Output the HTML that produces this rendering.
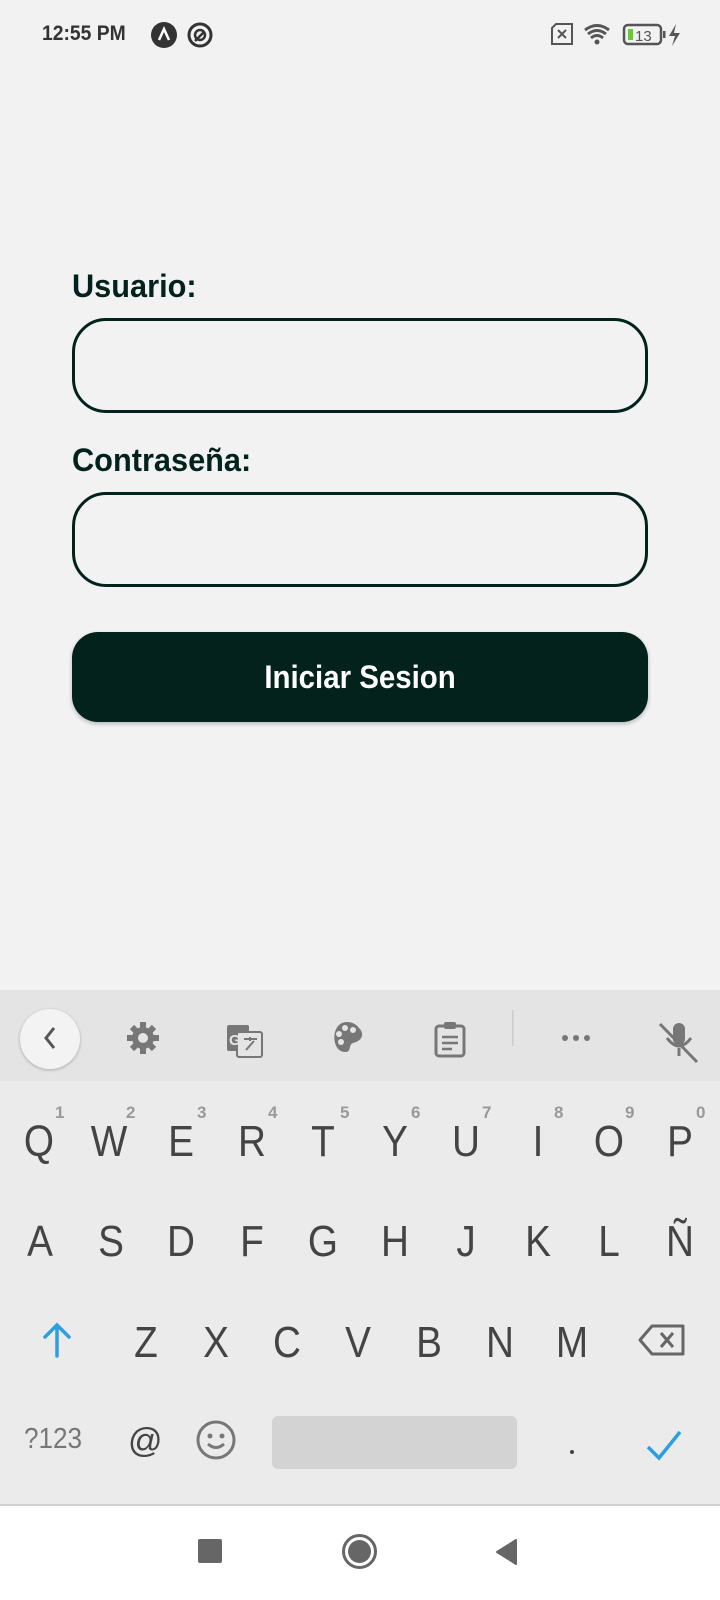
<!DOCTYPE html>
<html><head><meta charset="utf-8"><style>
*{margin:0;padding:0;box-sizing:border-box}
body{width:720px;height:1600px;background:#f2f2f2;font-family:"Liberation Sans",sans-serif;position:relative;overflow:hidden}
.abs{position:absolute}
.lbl{position:absolute;left:72px;font-size:32px;font-weight:bold;color:#02221b;transform:scaleX(.96);transform-origin:left}
.inp{position:absolute;left:72px;width:576px;height:95px;border:3px solid #02221b;border-radius:34px}
.btn{position:absolute;left:72px;top:632px;width:576px;height:90px;background:#02221b;border-radius:26px;box-shadow:0 2px 4px rgba(0,0,0,.25);color:#fff;font-weight:bold;font-size:32px;text-align:center;line-height:90px}
.kb{position:absolute;left:0;top:990px;width:720px;height:514px;background:#ebebeb}
.tb{position:absolute;left:0;top:990px;width:720px;height:91px;background:#e4e4e4}
.k{position:absolute;width:72px;text-align:center;font-size:44px;color:#444;line-height:1;transform:scaleX(.88)}
.d{position:absolute;font-size:17px;color:#999;font-weight:bold}
.nav{position:absolute;left:0;top:1504px;width:720px;height:96px;background:#fff;border-top:2px solid #d0d0d0}
</style></head><body>
<div class="abs" style="left:42px;top:22px;font-size:21px;font-weight:bold;color:#333;transform:scaleX(.92);transform-origin:left">12:55 PM</div>
<svg class="abs" style="left:150px;top:21px" width="64" height="28"><circle cx="14" cy="14" r="13" fill="#333"/><path d="M9 19 L14 8 L19 19" stroke="#fff" stroke-width="2.5" fill="none"/><circle cx="50" cy="14" r="11" stroke="#333" stroke-width="3" fill="none"/><circle cx="50" cy="14" r="5" stroke="#333" stroke-width="2.5" fill="none"/><path d="M45 20 L54 11" stroke="#333" stroke-width="2.5"/></svg>
<svg class="abs" style="left:548px;top:22px" width="142" height="26">
<path d="M4 6 L8 2 H24 V22 H4 Z" stroke="#555" stroke-width="2" fill="none"/><path d="M10 8 L18 16 M18 8 L10 16" stroke="#555" stroke-width="2"/>
<path d="M37 8 Q49 -1 61 8 M40 12 Q49 5 58 12 M43 16 Q49 11 55 16" stroke="#555" stroke-width="3" fill="none"/><circle cx="49" cy="20" r="2.5" fill="#555"/>
<rect x="76" y="3" width="37" height="19" rx="4" stroke="#555" stroke-width="2.5" fill="none"/><rect x="80" y="7" width="5" height="11" fill="#6c3"/><text x="87" y="19" font-size="15" fill="#555" font-family="Liberation Sans">13</text><rect x="115" y="9" width="2.5" height="7" fill="#555"/>
<path d="M128 2 L121 14 H127 L124 24 L132 11 H126 Z" fill="#555"/></svg>

<div class="lbl" style="top:268px">Usuario:</div>
<div class="inp" style="top:318px"></div>
<div class="lbl" style="top:442px">Contraseña:</div>
<div class="inp" style="top:492px"></div>
<div class="btn"><span style="display:inline-block;transform:scaleX(.92)">Iniciar Sesion</span></div>

<div class="kb"></div>
<div class="tb"></div>
<div class="abs" style="left:20px;top:1009px;width:60px;height:60px;border-radius:50%;background:#f3f3f3;box-shadow:0 1px 3px rgba(0,0,0,.25)"></div>
<svg class="abs" style="left:0;top:1010px" width="720" height="71" fill="#777">
<path d="M54 18 L46 28 L54 38" stroke="#555" stroke-width="3" fill="none"/>
<circle cx="143" cy="28" r="11"/><g stroke="#777" stroke-width="6"><path d="M143 12V44M127 28H159M132 17L154 39M154 17L132 39"/></g><circle cx="143" cy="28" r="5" fill="#e4e4e4"/>
<rect x="227" y="15" width="22" height="26" rx="2"/><rect x="237" y="22" width="25" height="25" rx="2" stroke="#777" stroke-width="2" fill="#e4e4e4"/><text x="229" y="35" font-size="15" font-weight="bold" fill="#e4e4e4" font-family="Liberation Sans">G</text><path d="M244 29H257M250 27V31M246 40L254 31" stroke="#777" stroke-width="2"/>
<path d="M347 12 C330 12 331 42 345 42 C352 42 348 35 353 33 C362 31 365 24 359 18 C356 14 352 12 347 12Z"/><g fill="#e4e4e4"><circle cx="339" cy="24" r="3"/><circle cx="345" cy="18" r="3"/><circle cx="353" cy="20" r="3"/><circle cx="341" cy="32" r="3"/></g>
<rect x="436" y="16" width="28" height="30" rx="3" stroke="#777" stroke-width="3" fill="none"/><rect x="444" y="12" width="12" height="7" rx="2"/><path d="M442 27H458M442 33H458M442 39H452" stroke="#777" stroke-width="2.5"/>
<rect x="512" y="-8" width="1.5" height="44" fill="#ccc"/>
<circle cx="565" cy="28" r="3"/><circle cx="576" cy="28" r="3"/><circle cx="587" cy="28" r="3"/>
<rect x="673" y="13" width="12" height="22" rx="6"/><path d="M667 28 Q679 44 691 28M679 38V46M660 14L697 52" stroke="#777" stroke-width="3" fill="none"/>
</svg>

<div class="k" style="left:3px;top:1120px">Q</div><div class="k" style="left:73px;top:1120px">W</div><div class="k" style="left:145px;top:1120px">E</div><div class="k" style="left:216px;top:1120px">R</div><div class="k" style="left:287px;top:1120px">T</div><div class="k" style="left:359px;top:1120px">Y</div><div class="k" style="left:430px;top:1120px">U</div><div class="k" style="left:502px;top:1120px">I</div><div class="k" style="left:573px;top:1120px">O</div><div class="k" style="left:644px;top:1120px">P</div>
<div class="d" style="left:55px;top:1103px">1</div><div class="d" style="left:126px;top:1103px">2</div><div class="d" style="left:197px;top:1103px">3</div><div class="d" style="left:268px;top:1103px">4</div><div class="d" style="left:340px;top:1103px">5</div><div class="d" style="left:411px;top:1103px">6</div><div class="d" style="left:482px;top:1103px">7</div><div class="d" style="left:554px;top:1103px">8</div><div class="d" style="left:625px;top:1103px">9</div><div class="d" style="left:696px;top:1103px">0</div>
<div class="k" style="left:4px;top:1220px">A</div><div class="k" style="left:75px;top:1220px">S</div><div class="k" style="left:145px;top:1220px">D</div><div class="k" style="left:216px;top:1220px">F</div><div class="k" style="left:287px;top:1220px">G</div><div class="k" style="left:359px;top:1220px">H</div><div class="k" style="left:430px;top:1220px">J</div><div class="k" style="left:502px;top:1220px">K</div><div class="k" style="left:573px;top:1220px">L</div><div class="k" style="left:644px;top:1220px">Ñ</div>
<svg class="abs" style="left:40px;top:1322px" width="34" height="36"><path d="M17 34V4M5 15L17 3L29 15" stroke="#2e9ee0" stroke-width="3.5" fill="none" stroke-linecap="round"/></svg>
<div class="k" style="left:110px;top:1321px">Z</div><div class="k" style="left:180px;top:1321px">X</div><div class="k" style="left:251px;top:1321px">C</div><div class="k" style="left:322px;top:1321px">V</div><div class="k" style="left:393px;top:1321px">B</div><div class="k" style="left:464px;top:1321px">N</div><div class="k" style="left:536px;top:1321px">M</div>
<svg class="abs" style="left:638px;top:1323px" width="48" height="34"><path d="M14 3H45V31H14L2 17Z" stroke="#666" stroke-width="3" fill="none" stroke-linejoin="round"/><path d="M23 10L35 24M35 10L23 24" stroke="#666" stroke-width="3"/></svg>
<div class="abs" style="left:24px;top:1423px;font-size:29px;color:#777;transform:scaleX(.9);transform-origin:left">?123</div>
<div class="abs" style="left:128px;top:1422px;font-size:34px;color:#444">@</div>
<svg class="abs" style="left:195px;top:1419px" width="42" height="42"><circle cx="21" cy="21" r="18" stroke="#777" stroke-width="3" fill="none"/><circle cx="15" cy="17" r="2.5" fill="#777"/><circle cx="27" cy="17" r="2.5" fill="#777"/><path d="M13 25Q21 32 29 25" stroke="#777" stroke-width="3" fill="none"/></svg>
<div class="abs" style="left:272px;top:1416px;width:245px;height:53px;background:#d3d3d3;border-radius:6px"></div>
<div class="abs" style="left:570px;top:1450px;width:4px;height:4px;border-radius:50%;background:#444"></div>
<svg class="abs" style="left:645px;top:1428px" width="38" height="34"><path d="M3 19L14 30L35 4" stroke="#2e9ee0" stroke-width="3.5" fill="none"/></svg>
<div class="nav"></div>
<div class="abs" style="left:198px;top:1539px;width:24px;height:24px;background:#666;border-radius:2px"></div>
<div class="abs" style="left:342px;top:1534px;width:35px;height:35px;border-radius:50%;border:3px solid #666"></div>
<div class="abs" style="left:348px;top:1540px;width:23px;height:23px;border-radius:50%;background:#666"></div>
<svg class="abs" style="left:494px;top:1538px" width="24" height="28"><path d="M22 2V26L3 14Z" fill="#666" stroke="#666" stroke-width="2" stroke-linejoin="round"/></svg>
</body></html>
